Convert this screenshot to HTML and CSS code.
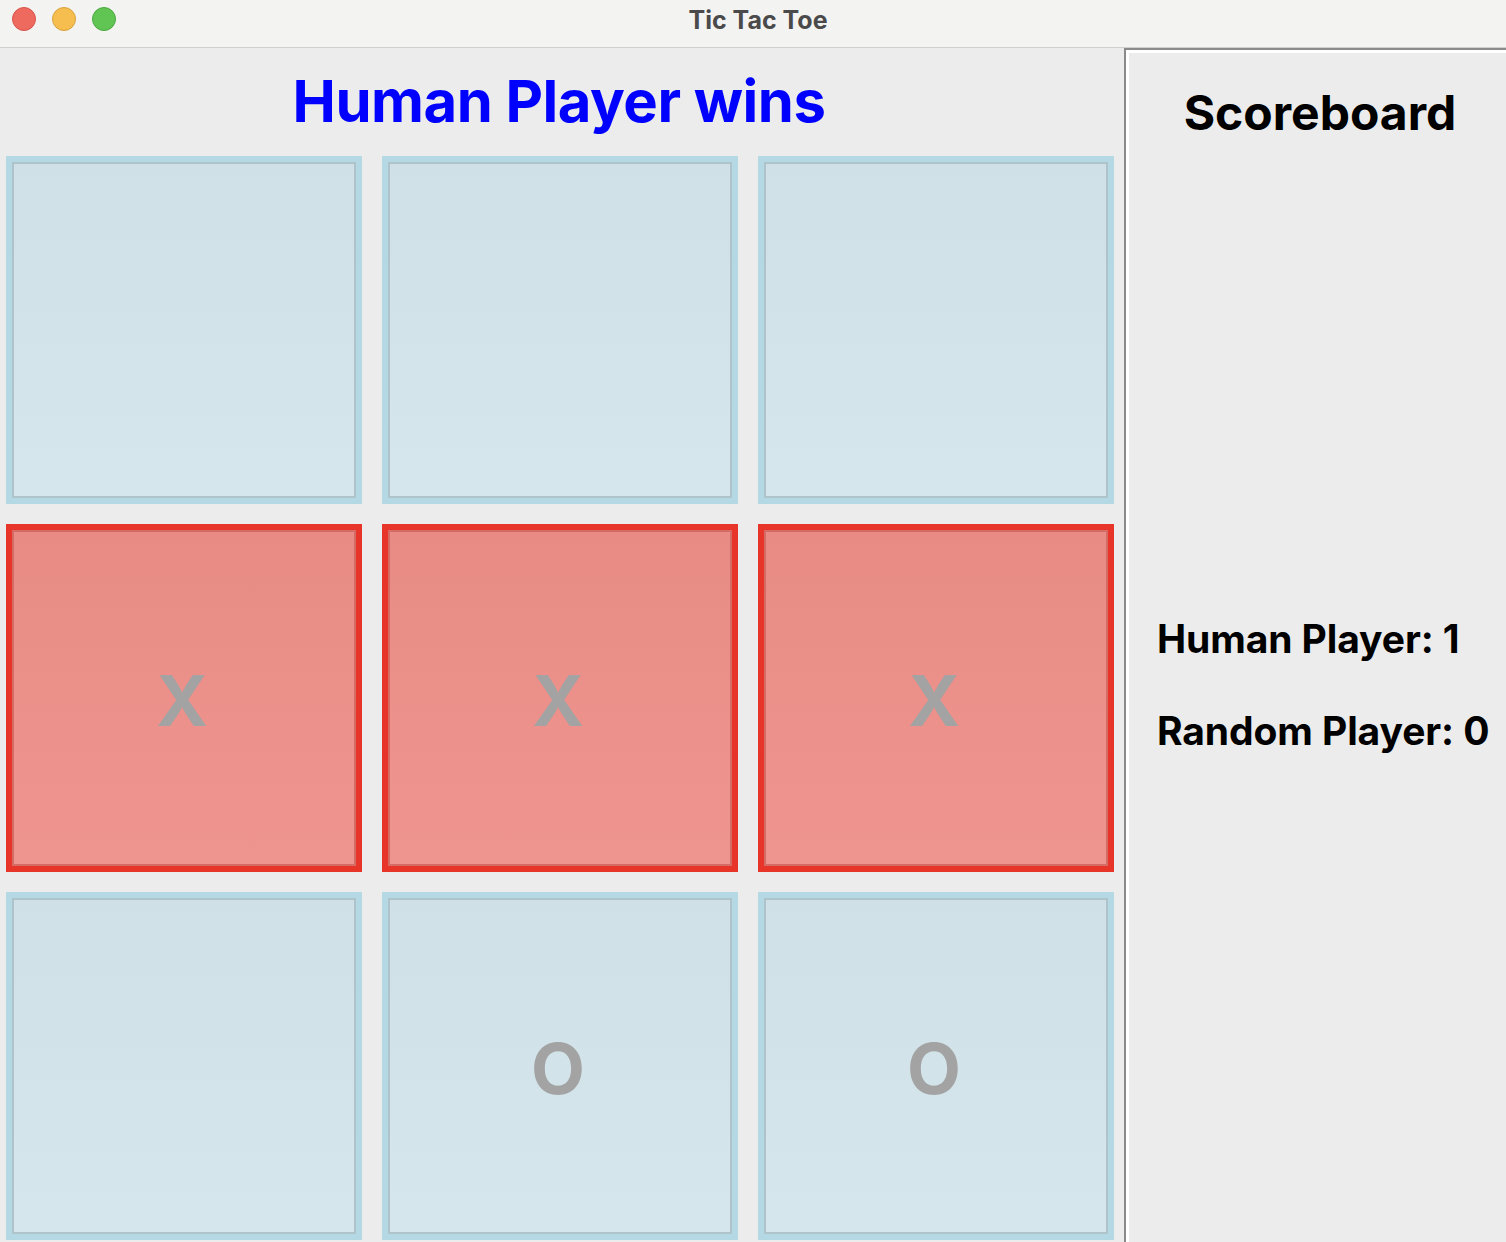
FILE: index.html
```html
<!DOCTYPE html>
<html>
<head>
<meta charset="utf-8">
<title>Tic Tac Toe</title>
<link rel="stylesheet" href="styles.css">
</head>
<body>
<div class="window">
  <div class="titlebar">
    <div class="lights">
      <span class="light red"></span>
      <span class="light yellow"></span>
      <span class="light green"></span>
    </div>
    <div class="wintitle">Tic Tac Toe</div>
  </div>
  <div class="content">
    <div class="game">
      <div class="status">Human Player wins</div>
      <div class="board">
        <div class="cell"><div class="inner"></div></div>
        <div class="cell"><div class="inner"></div></div>
        <div class="cell"><div class="inner"></div></div>
        <div class="cell win"><div class="inner">X</div></div>
        <div class="cell win"><div class="inner">X</div></div>
        <div class="cell win"><div class="inner">X</div></div>
        <div class="cell"><div class="inner"></div></div>
        <div class="cell"><div class="inner">O</div></div>
        <div class="cell"><div class="inner">O</div></div>
      </div>
    </div>
    <div class="scoreboard">
      <div class="sb-title">Scoreboard</div>
      <div class="scores">
        <div class="score">Human Player: 1</div>
        <div class="score">Random Player: 0</div>
      </div>
    </div>
  </div>
</div>
</body>
</html>
```
FILE: styles.css
```css
html, body {
  margin: 0;
  padding: 0;
  background: #ececec;
  font-family: Inter, "Noto Sans", "Liberation Sans", sans-serif;
}
.window {
  width: 1506px;
  height: 1242px;
  display: flex;
  flex-direction: column;
  overflow: hidden;
}
.titlebar {
  height: 48px;
  box-sizing: border-box;
  border-bottom: 1px solid #cfcfcf;
  background: #f3f3f2;
  position: relative;
  display: flex;
  align-items: center;
  justify-content: center;
}
.lights {
  position: absolute;
  left: 12px;
  top: 7px;
  display: flex;
  gap: 16px;
}
.light {
  width: 24px;
  height: 24px;
  border-radius: 50%;
  box-sizing: border-box;
}
.light.red { background: #ee6a5f; border: 1px solid #d8544a; }
.light.yellow { background: #f5be4f; border: 1px solid #d9a23b; }
.light.green { background: #61c554; border: 1px solid #4ba83f; }
.wintitle {
  font-size: 25px;
  font-weight: 700;
  color: #4a4a4a;
  margin-left: 10px;
  margin-top: -8px;
}
.content {
  flex: 1;
  display: flex;
}
.game {
  width: 1124px;
  display: flex;
  flex-direction: column;
}
.status {
  height: 108px;
  display: flex;
  align-items: center;
  justify-content: center;
  font-size: 58px;
  font-weight: 700;
  color: #0000ff;
  letter-spacing: -0.5px;
  padding-right: 6px;
  padding-bottom: 2px;
  box-sizing: border-box;
}
.board {
  display: grid;
  grid-template-columns: repeat(3, 356px);
  grid-template-rows: repeat(3, 348px);
  gap: 20px;
  padding-left: 6px;
}
.cell {
  border: 6px solid #b4d8e4;
  display: flex;
}
.inner {
  flex: 1;
  border: 2px solid #afc3cb;
  background: linear-gradient(#cfe0e7, #d5e6ec);
  display: flex;
  align-items: center;
  justify-content: center;
  font-size: 70px;
  font-weight: 700;
  color: #a3a3a3;
  padding-top: 4px;
  padding-right: 4px;
}
.cell.win {
  border-color: #e8352a;
}
.cell.win .inner {
  border-color: #d46c65;
  background: linear-gradient(#e88b85, #ef958f);
}
.scoreboard {
  flex: 1;
  border-top: 2px solid #8a8a8a;
  border-left: 2px solid #8a8a8a;
  box-shadow: inset 3px 3px 0 #ffffff;
  display: flex;
  flex-direction: column;
}
.sb-title {
  text-align: center;
  font-size: 48px;
  font-weight: 700;
  color: #000;
  margin-top: 34px;
  padding-left: 8px;
  line-height: 58px;
}
.scores {
  margin-top: 475px;
  padding-left: 31px;
  display: flex;
  flex-direction: column;
  gap: 48px;
}
.score {
  font-size: 39px;
  font-weight: 700;
  color: #000;
  line-height: 44px;
  letter-spacing: -0.1px;
}
```
